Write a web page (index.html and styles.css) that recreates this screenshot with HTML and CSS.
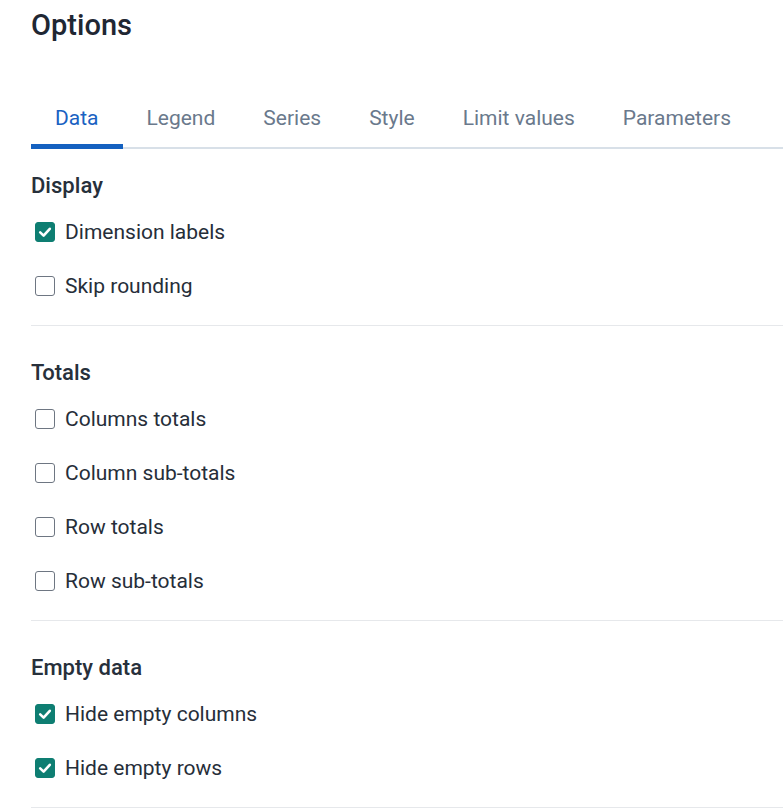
FILE: index.html
```html
<!DOCTYPE html>
<html lang="en">
<head>
<meta charset="utf-8">
<title>Options</title>
<link rel="stylesheet" href="styles.css">
</head>
<body>
<div class="panel">
  <h1 class="title">Options</h1>
  <nav class="tabs">
    <div class="tab active">Data</div>
    <div class="tab">Legend</div>
    <div class="tab">Series</div>
    <div class="tab">Style</div>
    <div class="tab">Limit values</div>
    <div class="tab">Parameters</div>
  </nav>

  <section class="section first">
    <h2 class="heading">Display</h2>
    <label class="row"><span class="box checked"><svg viewBox="0 0 20 20"><path d="M5.2 10.4 L8.6 13.6 L14.8 6.8"/></svg></span><span class="label">Dimension labels</span></label>
    <label class="row"><span class="box"></span><span class="label">Skip rounding</span></label>
  </section>

  <section class="section">
    <h2 class="heading">Totals</h2>
    <label class="row"><span class="box"></span><span class="label">Columns totals</span></label>
    <label class="row"><span class="box"></span><span class="label">Column sub-totals</span></label>
    <label class="row"><span class="box"></span><span class="label">Row totals</span></label>
    <label class="row"><span class="box"></span><span class="label">Row sub-totals</span></label>
  </section>

  <section class="section">
    <h2 class="heading">Empty data</h2>
    <label class="row"><span class="box checked"><svg viewBox="0 0 20 20"><path d="M5.2 10.4 L8.6 13.6 L14.8 6.8"/></svg></span><span class="label">Hide empty columns</span></label>
    <label class="row"><span class="box checked"><svg viewBox="0 0 20 20"><path d="M5.2 10.4 L8.6 13.6 L14.8 6.8"/></svg></span><span class="label">Hide empty rows</span></label>
  </section>
</div>
</body>
</html>
```

FILE: styles.css
```css
* { box-sizing: border-box; }
html, body {
  margin: 0;
  padding: 0;
  background: #ffffff;
}
body {
  font-family: Roboto, "Liberation Sans", sans-serif;
  color: #232b36;
  overflow: hidden;
}
.panel {
  padding-left: 31px;
}
.title {
  margin: 0;
  padding-top: 5px;
  font-family: "Roboto Medium", Roboto, "Liberation Sans", sans-serif;
  font-size: 29px;
  line-height: 40px;
  font-weight: 500;
  color: #1f2733;
}
.tabs {
  display: flex;
  margin-top: 49px;
  border-bottom: 2px solid #d8e0e8;
}
.tab {
  padding: 12px 24px 14px;
  font-size: 21px;
  line-height: 24px;
  color: #6a798c;
  border-bottom: 5px solid transparent;
  margin-bottom: -2px;
}
.tab.active {
  color: #1a62c2;
  border-bottom-color: #1461c0;
}
.section {
  padding-top: 33px;
  padding-bottom: 12px;
  border-bottom: 1px solid #e6e8eb;
}
.section.first {
  padding-top: 23px;
}
.heading {
  margin: 0 0 5px;
  font-family: "Roboto Medium", Roboto, "Liberation Sans", sans-serif;
  font-size: 22px;
  line-height: 28px;
  font-weight: 500;
  color: #27303b;
}
.row {
  display: flex;
  align-items: center;
  height: 54px;
  padding-left: 4px;
}
.box {
  width: 20px;
  height: 20px;
  border: 1.5px solid #6e7682;
  border-radius: 3px;
  margin-right: 10px;
  display: flex;
  align-items: center;
  justify-content: center;
  flex: none;
}
.box.checked {
  background: #0e7e72;
  border-color: #0e7e72;
}
.box svg {
  width: 20px;
  height: 20px;
  flex: none;
}
.box svg path {
  fill: none;
  stroke: #ffffff;
  stroke-width: 2.6;
  stroke-linecap: round;
  stroke-linejoin: round;
}
.label {
  font-size: 21px;
  line-height: 24px;
  color: #262e39;
}
```
